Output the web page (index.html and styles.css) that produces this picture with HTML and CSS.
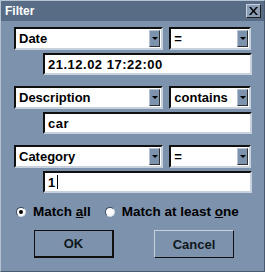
FILE: index.html
```html
<!DOCTYPE html>
<html lang="en">
  <head>
    <meta charset="UTF-8" />
    <title>Filter</title>
    <link rel="stylesheet" href="styles.css">
  </head>
  <body>
    <div class="dialog">
      <div class="titlebar">
        <span class="title">Filter</span>
        <button class="close">
          <svg width="9" height="8" viewBox="0 0 9 8">
            <path d="M0 0h2l2.5 3 2.5-3h2l-3.5 4 3.5 4h-2l-2.5-3-2.5 3h-2l3.5-4z" fill="#000" />
          </svg>
        </button>
      </div>

      <div class="content">
        <div class="condition">
          <div class="row">
            <div class="combo field-name"><span>Date</span><i class="drop"></i></div>
            <div class="combo field-op"><span>=</span><i class="drop"></i></div>
          </div>
          <div class="value">21.12.02 17:22:00</div>
        </div>

        <div class="condition">
          <div class="row">
            <div class="combo field-name"><span>Description</span><i class="drop"></i></div>
            <div class="combo field-op"><span>contains</span><i class="drop"></i></div>
          </div>
          <div class="value">car</div>
        </div>

        <div class="condition">
          <div class="row">
            <div class="combo field-name"><span>Category</span><i class="drop"></i></div>
            <div class="combo field-op"><span>=</span><i class="drop"></i></div>
          </div>
          <div class="value">1<span class="caret"></span></div>
        </div>

        <div class="radios">
          <label class="radio"><i class="dot checked"></i><span>Match <u>a</u>ll</span></label>
          <label class="radio"><i class="dot"></i><span>Match at least <u>o</u>ne</span></label>
        </div>

        <div class="buttons">
          <button class="btn default">OK</button>
          <button class="btn">Cancel</button>
        </div>
      </div>
    </div>
  </body>
</html>
```

FILE: styles.css
```css
body {
  margin: 0;
  font-family: "Liberation Sans", Arial, sans-serif;
  font-size: 12px;
  font-weight: bold;
}

.dialog {
  width: 265px;
  height: 272px;
  box-sizing: border-box;
  background-color: #7d93ad;
  border-left: 1px solid #b4c2d2;
  border-top: 1px solid #b4c2d2;
  border-right: 1px solid #4a5a6e;
  border-bottom: 1px solid #4a5a6e;
}

.titlebar {
  height: 20px;
  background-color: #586c85;
  display: flex;
  align-items: center;
  justify-content: space-between;
  padding: 0 3px 0 4px;
}

.title {
  color: white;
  font-size: 12px;
}

.close {
  width: 15px;
  height: 14px;
  padding: 0;
  display: flex;
  align-items: center;
  justify-content: center;
  background-color: #8a9db4;
  border: 1px solid;
  border-color: #c8d2de #202020 #202020 #c8d2de;
}

.content {
  padding: 6px 13px 0 13px;
}

.condition {
  margin-bottom: 11px;
}

.row {
  display: flex;
  gap: 6px;
}

.combo {
  height: 23px;
  box-sizing: border-box;
  background: white;
  border: 2px solid;
  border-color: #101010 #c8d2de #c8d2de #101010;
  display: flex;
  align-items: center;
  justify-content: space-between;
  padding: 0 1px 0 3px;
  font-size: 13px;
}

.field-name {
  width: 150px;
}

.field-op {
  width: 82px;
}

.drop {
  width: 11px;
  height: 17px;
  box-sizing: border-box;
  background-color: #7d93ad;
  border: 1px solid;
  border-color: #b4c2d2 #303030 #303030 #b4c2d2;
  display: flex;
  align-items: center;
  justify-content: center;
}

.drop::after {
  content: "";
  border-left: 3px solid transparent;
  border-right: 3px solid transparent;
  border-top: 3px solid #000;
}

.value {
  margin: 3px 0 0 29px;
  width: 209px;
  height: 22px;
  box-sizing: border-box;
  background: white;
  border: 2px solid;
  border-color: #101010 #c8d2de #c8d2de #101010;
  padding: 0 3px;
  font-size: 13px;
  letter-spacing: 0.5px;
  display: flex;
  align-items: center;
}

.caret {
  display: inline-block;
  width: 1px;
  height: 14px;
  background: #000;
  margin-left: 1px;
}

.radios {
  display: flex;
  gap: 14px;
  margin-top: 6px;
  padding-left: 2px;
  font-size: 13.5px;
}

.radio {
  display: flex;
  align-items: center;
  gap: 7px;
  color: #000;
}

.dot {
  width: 10px;
  height: 10px;
  border-radius: 50%;
  background: white;
  box-sizing: border-box;
  border: 1px solid;
  border-color: #3a4658 #d0d8e2 #d0d8e2 #3a4658;
  display: flex;
  align-items: center;
  justify-content: center;
}

.dot.checked::after {
  content: "";
  width: 4px;
  height: 4px;
  border-radius: 50%;
  background: #000;
}

.buttons {
  display: flex;
  gap: 40px;
  margin-top: 11px;
  padding-left: 20px;
}

.btn {
  width: 80px;
  height: 28px;
  box-sizing: border-box;
  background-color: #7d93ad;
  border: 1px solid;
  border-color: #c8d2de #101010 #101010 #c8d2de;
  font-family: "Liberation Sans", Arial, sans-serif;
  font-size: 13px;
  font-weight: bold;
  color: #101820;
}

.btn.default {
  border-width: 1px 2px 2px 1px;
  border-color: #101010;
  outline: none;
}
```
